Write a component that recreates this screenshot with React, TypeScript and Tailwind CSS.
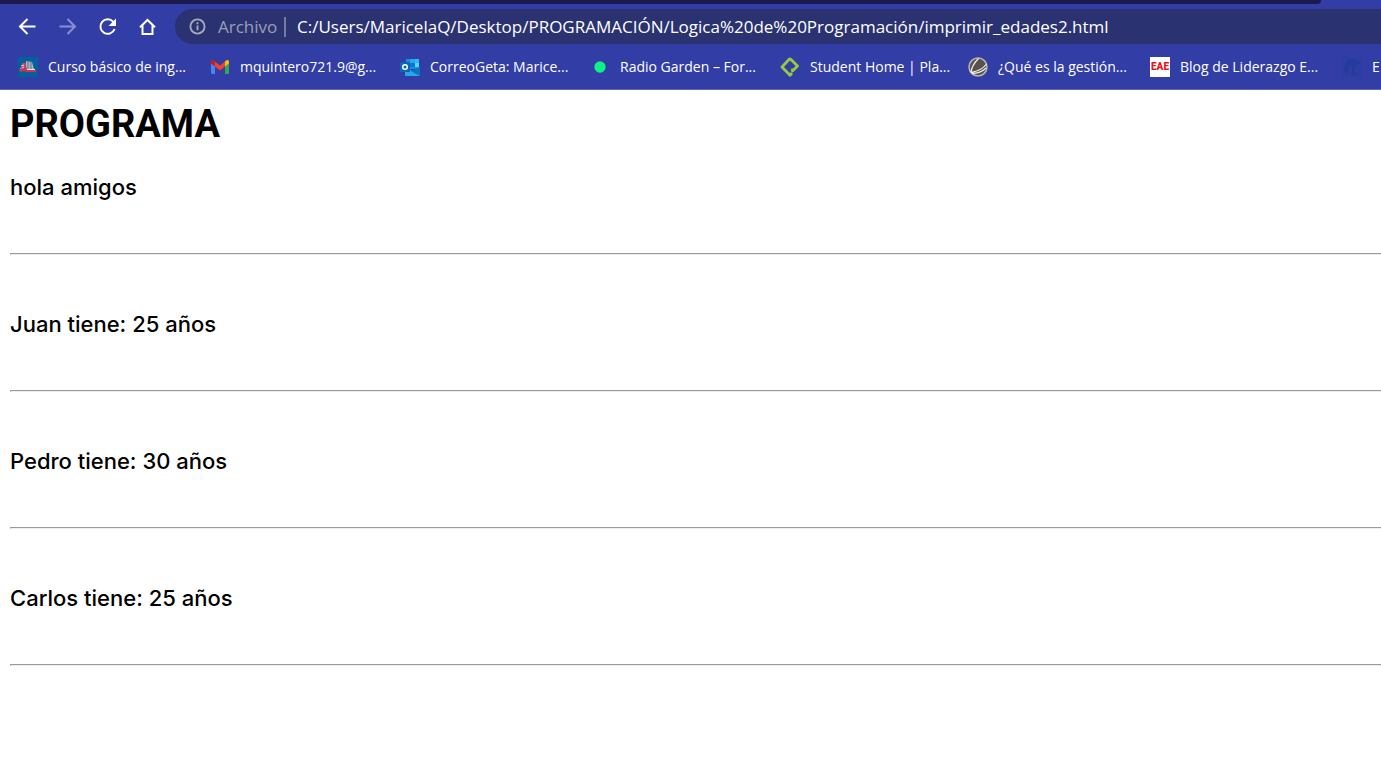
import type { ReactNode } from "react";

interface Bookmark {
  label: string;
  width: string;
  icon: ReactNode;
}

function CourseIcon() {
  return (
    <svg viewBox="0 0 20 20" className="size-5 shrink-0">
      <rect width="20" height="20" fill="#04609c" />
      <path d="M4 6h4v7H4z" fill="#c2455c" />
      <path d="M8 4l6 1 2 7H8z" fill="#a9b4c8" />
      <path d="M10 4v8M13 5v7" stroke="#5f6f95" />
      <path d="M3 9l3-1M2 12l4-2" stroke="#e9dfe8" />
      <path d="M1 13c2-2 3-2 5-1l2-3 1 4h8l2 1-2 1H9l-3-1-3 1z" fill="#d1354b" />
      <path d="M9 12.500h8" stroke="#f1e5ea" />
    </svg>
  );
}

function GmailIcon() {
  return (
    <svg viewBox="0 0 20 20" className="size-5 shrink-0">
      <path d="M1 6v9.500q0 1.500 1.500 1.500H5V8.500z" fill="#4285f4" />
      <path d="M15 8.500V17h2.500q1.500 0 1.500-1.500V6z" fill="#34a853" />
      <path d="M5 4.500l5 4 5-4V9.500l-5 4-5-4z" fill="#ea4335" />
      <path d="M1 5c0-2 2-2.500 3.200-1.200L5 4.500v5L1 6.500z" fill="#c5221f" />
      <path d="M19 5c0-2-2-2.500-3.200-1.200L15 4.500v5l4-3z" fill="#fbbc04" />
    </svg>
  );
}

function OutlookIcon() {
  return (
    <svg viewBox="0 0 20 20" className="size-5 shrink-0">
      <rect x="6" y="2" width="13" height="10" fill="#1490df" />
      <path d="M10 2h5v4h-5z" fill="#28a8ea" />
      <path d="M15 2h4v4h-4z" fill="#35b8f1" />
      <path d="M10 6h5v4h-5z" fill="#0078d4" />
      <path d="M15 6h4v4h-4z" fill="#50d9ff" />
      <path d="M5 10l8 4 7-4v9H5z" fill="#1b9de2" />
      <path d="M5 12l15 7H5z" fill="#28a8ea" />
      <path d="M20 10v9L11 14z" fill="#1272bd" />
      <rect y="5" width="10" height="10" rx="1" fill="#0b65b9" />
      <circle cx="5" cy="10" r="2.300" fill="none" stroke="#fff" strokeWidth="1.500" />
    </svg>
  );
}

function RadioIcon() {
  return (
    <svg viewBox="0 0 20 20" className="size-5 shrink-0">
      <circle cx="10" cy="10" r="5.700" fill="#0ff089" />
    </svg>
  );
}

function PlatziIcon() {
  return (
    <svg
      viewBox="0 0 20 20"
      className="size-5 shrink-0"
      fill="none"
      stroke="#98ca3f"
      strokeWidth="2.800"
      strokeLinejoin="round"
    >
      <path d="M12 16l-2 2.200L2 10l7-7.500q1-1 2 0L17.500 9l-5 5V11.500" />
    </svg>
  );
}

function GestionIcon() {
  return (
    <svg viewBox="0 0 20 20" className="size-5 shrink-0" fill="none">
      <circle cx="10" cy="10" r="9" fill="#55524f" stroke="#b9b6b4" strokeWidth="1.500" />
      <path
        d="M10.500 1.500C6 6 3.500 10 3 15.500M18.500 7C15 12 9 14.500 3 15.500M18 11c-4 4-9 5.500-14 5.500"
        stroke="#ece9e6"
        strokeWidth="1.300"
      />
    </svg>
  );
}

function EaeIcon() {
  return (
    <span className="flex size-5 shrink-0 items-center justify-center bg-white font-['Roboto'] text-[10px] font-black leading-none text-[#e3171f]">
      EAE
    </span>
  );
}

function InstituteIcon() {
  return (
    <svg viewBox="0 0 20 20" className="size-5 shrink-0">
      <rect x="0.500" y="0.500" width="19" height="19" fill="#2c3da3" stroke="#283f9f" />
      <path d="M5 18C1 12 2 4 9 2.500c4-.8 8 1 9 4H9c-3 2-4 6-4 11.500z" fill="#233b9b" />
      <path d="M8 7h7v2h-2v7h3v2H9v-2h1V9H8z" fill="#233b9b" />
    </svg>
  );
}

const bookmarks: Bookmark[] = [
  { label: "Curso básico de ing...", width: "w-[192px]", icon: <CourseIcon /> },
  { label: "mquintero721.9@g...", width: "w-[190px]", icon: <GmailIcon /> },
  { label: "CorreoGeta: Marice...", width: "w-[190px]", icon: <OutlookIcon /> },
  { label: "Radio Garden – For...", width: "w-[190px]", icon: <RadioIcon /> },
  { label: "Student Home | Pla...", width: "w-[188px]", icon: <PlatziIcon /> },
  { label: "¿Qué es la gestión...", width: "w-[182px]", icon: <GestionIcon /> },
  { label: "Blog de Liderazgo E...", width: "w-[192px]", icon: <EaeIcon /> },
  { label: "E", width: "w-[192px]", icon: <InstituteIcon /> },
];

const lines = [
  "hola amigos",
  "Juan tiene: 25 años",
  "Pedro tiene: 30 años",
  "Carlos tiene: 25 años",
];

function NavButton({ label, dim, children }: { label: string; dim?: boolean; children: ReactNode }) {
  return (
    <button
      type="button"
      aria-label={label}
      disabled={dim}
      className="flex size-5 items-center justify-center text-white disabled:text-[#8a90cf]"
    >
      <svg viewBox="0 0 20 20" className="size-5" fill="none" stroke="currentColor" strokeWidth="2">
        {children}
      </svg>
    </button>
  );
}

function Toolbar() {
  return (
    <div className="flex items-center pt-[5px] pl-[18px]">
      <nav className="flex shrink-0 gap-5">
        <NavButton label="Atrás">
          <path d="M17.500 9.500H3M9.500 2L2 9.500 9.500 17" />
        </NavButton>
        <NavButton label="Adelante" dim>
          <path d="M1.500 9.500H16M9.500 2L17 9.500 9.500 17" />
        </NavButton>
        <NavButton label="Recargar">
          <path d="M15.300 4.800A7.300 7.300 0 1 0 16.600 12" />
          <path d="M18 1.500V9h-7.500z" fill="currentColor" stroke="none" />
        </NavButton>
        <NavButton label="Inicio">
          <path d="M2 10.300l7.500-7.300 7.500 7.300M4.500 8.500V17h10V8.500" />
        </NavButton>
      </nav>
      <div className="ml-[17px] flex h-[35px] min-w-0 flex-1 items-center rounded-l-full bg-[#2b3272] pl-[14px]">
        <svg viewBox="0 0 18 18" className="size-[17px] shrink-0" fill="none" stroke="#a6a9b8" strokeWidth="2">
          <circle cx="9" cy="9" r="7.500" />
          <path d="M9 8v5M9 4.500v2" />
        </svg>
        <label htmlFor="url" className="ml-3 w-[58px] shrink-0 text-[#9b9fb5]">
          Archivo
        </label>
        <span className="ml-2 h-5 w-[2px] shrink-0 bg-[#767b9f]" />
        <input
          id="url"
          type="text"
          defaultValue="C:/Users/MaricelaQ/Desktop/PROGRAMACIÓN/Logica%20de%20Programación/imprimir_edades2.html"
          className="ml-[11px] min-w-0 flex-1 bg-transparent text-white outline-none"
        />
      </div>
    </div>
  );
}

export default function App() {
  return (
    <div className="min-h-screen overflow-hidden bg-white">
      <header className="border-b border-[#6069ba] bg-[#323da6] font-['Open_Sans',sans-serif] text-[17px]">
        <div className="mr-[60px] h-1 rounded-br-lg bg-[#1b1950]" />
        <Toolbar />
        <div className="flex h-[45px] items-center overflow-hidden pl-[18px] text-sm text-white">
          {bookmarks.map((bookmark) => (
            <a
              key={bookmark.label}
              href="#"
              className={`flex shrink-0 items-center gap-[10px] whitespace-nowrap ${bookmark.width}`}
            >
              {bookmark.icon}
              {bookmark.label}
            </a>
          ))}
        </div>
      </header>

      <main className="pt-3 pl-[10px] text-black">
        <h1 className="font-['Roboto',sans-serif] text-[38px] font-bold leading-[44px]">PROGRAMA</h1>
        <div className="-mt-7">
          {lines.map((line) => (
            <section key={line} className="pt-[55px] font-['Inter',sans-serif] text-[22px] font-medium">
              <p className="h-20 leading-7">{line}</p>
              <hr className="h-[2px] border-t border-b border-l border-t-[#9a9a9a] border-b-[#eeeeee] border-l-[#9a9a9a]" />
            </section>
          ))}
        </div>
      </main>
    </div>
  );
}
